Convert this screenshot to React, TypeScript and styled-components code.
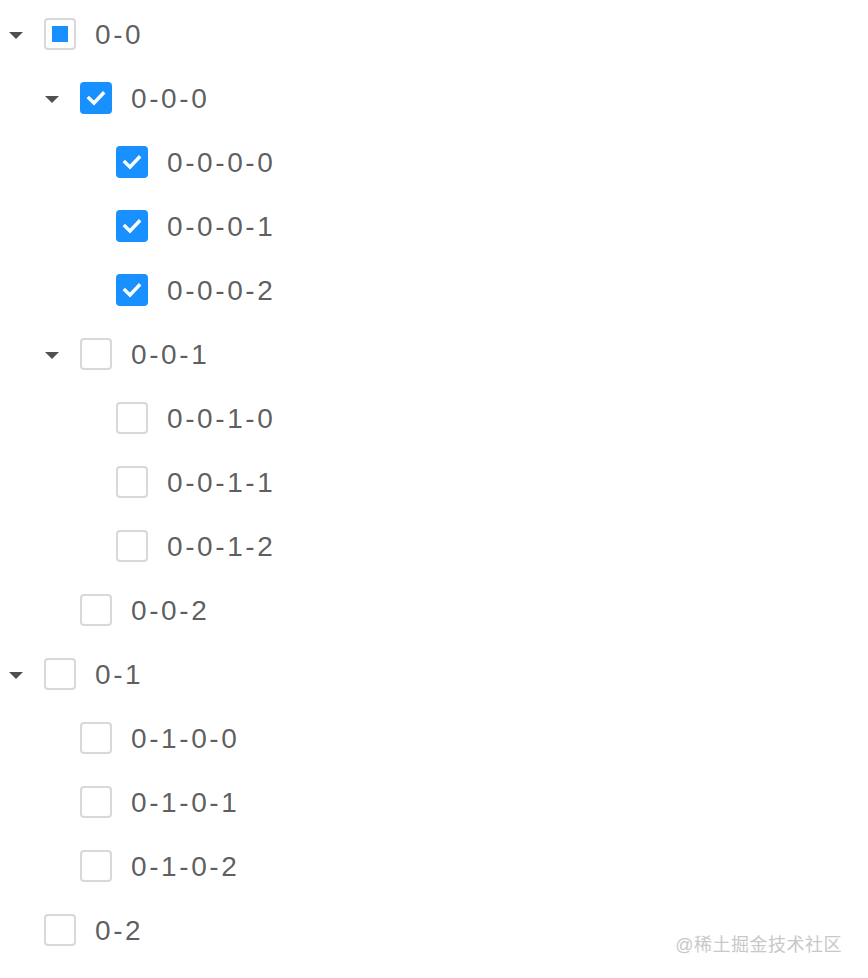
import styled, { createGlobalStyle } from "styled-components";

const GlobalStyle = createGlobalStyle`
  html, body {
    margin: 0;
    padding: 0;
    background: #ffffff;
  }
  body {
    font-family: "Liberation Sans", "Noto Sans", "Noto Sans CJK SC", sans-serif;
  }
`;

type CheckState = "checked" | "unchecked" | "indeterminate";

interface TreeNode {
  key: string;
  state: CheckState;
  children?: TreeNode[];
}

const leaf = (key: string, state: CheckState = "unchecked"): TreeNode => ({ key, state });

const treeData: TreeNode[] = [
  {
    key: "0-0",
    state: "indeterminate",
    children: [
      {
        key: "0-0-0",
        state: "checked",
        children: [leaf("0-0-0-0", "checked"), leaf("0-0-0-1", "checked"), leaf("0-0-0-2", "checked")],
      },
      {
        key: "0-0-1",
        state: "unchecked",
        children: [leaf("0-0-1-0"), leaf("0-0-1-1"), leaf("0-0-1-2")],
      },
      leaf("0-0-2"),
    ],
  },
  {
    key: "0-1",
    state: "unchecked",
    children: [leaf("0-1-0-0"), leaf("0-1-0-1"), leaf("0-1-0-2")],
  },
  leaf("0-2"),
];

const Page = styled.div`
  position: relative;
  width: 868px;
  height: 978px;
  padding-top: 2px;
  box-sizing: border-box;
`;

const TreeList = styled.ul`
  list-style: none;
  margin: 0;
  padding: 0;
`;

const Row = styled.li<{ $level: number }>`
  display: flex;
  align-items: center;
  height: 64px;
  padding-left: ${({ $level }) => $level * 36}px;
`;

const Switcher = styled.span`
  width: 30px;
  height: 32px;
  margin-right: 14px;
  display: flex;
  align-items: center;
  justify-content: center;
  flex-shrink: 0;
`;

const Caret = styled.span`
  width: 0;
  height: 0;
  margin-left: 2px;
  margin-top: 2px;
  border-left: 7px solid transparent;
  border-right: 7px solid transparent;
  border-top: 7px solid #505050;
`;

const Box = styled.span<{ $state: CheckState }>`
  position: relative;
  width: 32px;
  height: 32px;
  box-sizing: border-box;
  border-radius: 4px;
  border: 2px solid ${({ $state }) => ($state === "checked" ? "#1890ff" : "#d9d9d9")};
  background: ${({ $state }) => ($state === "checked" ? "#1890ff" : "#ffffff")};
  display: flex;
  align-items: center;
  justify-content: center;
  flex-shrink: 0;
`;

const InnerSquare = styled.span`
  width: 16px;
  height: 16px;
  background: #1890ff;
`;

const Title = styled.span`
  margin-left: 19px;
  padding-top: 2px;
  font-size: 28px;
  letter-spacing: 2.6px;
  color: rgba(0, 0, 0, 0.65);
  line-height: 32px;
`;

const Watermark = styled.div`
  position: absolute;
  right: 26px;
  bottom: 22px;
  font-size: 18px;
  color: #c8c8c8;
  font-family: "Liberation Sans", "Noto Sans CJK SC", sans-serif;
  letter-spacing: 0.5px;
`;

const CheckMark = () => (
  <svg width="20" height="16" viewBox="0 0 20 16">
    <path d="M3 8.2 L8 13 L17 3.5" fill="none" stroke="#ffffff" strokeWidth="3.4" strokeLinecap="square" />
  </svg>
);

const Checkbox = ({ state }: { state: CheckState }) => (
  <Box $state={state}>
    {state === "checked" && <CheckMark />}
    {state === "indeterminate" && <InnerSquare />}
  </Box>
);

const flatten = (nodes: TreeNode[], level = 0): { node: TreeNode; level: number }[] =>
  nodes.flatMap((node) => [{ node, level }, ...(node.children ? flatten(node.children, level + 1) : [])]);

export default function App() {
  const rows = flatten(treeData);
  return (
    <Page>
      <GlobalStyle />
      <TreeList>
        {rows.map(({ node, level }) => (
          <Row key={node.key} $level={level}>
            <Switcher>{node.children && <Caret />}</Switcher>
            <Checkbox state={node.state} />
            <Title>{node.key}</Title>
          </Row>
        ))}
      </TreeList>
      <Watermark>@稀土掘金技术社区</Watermark>
    </Page>
  );
}
